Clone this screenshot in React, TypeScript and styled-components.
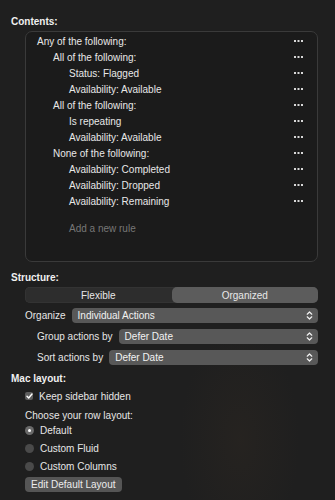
import styled, { createGlobalStyle } from "styled-components";

const GlobalStyle = createGlobalStyle`
  html, body {
    margin: 0;
    padding: 0;
    background: #1f1f1f;
  }
  body {
    font-family: "Liberation Sans", Arial, sans-serif;
    font-size: 10px;
    color: #e6e6e6;
    -webkit-font-smoothing: antialiased;
  }
`;

const Page = styled.div`
  width: 335px;
  height: 500px;
  box-sizing: border-box;
  padding: 13px 17px 0 11px;
  background:
    radial-gradient(ellipse 80px 150px at 240px 440px, rgba(55, 45, 35, 0.28), transparent 75%),
    #1f1f1f;
  overflow: hidden;
`;

const SectionTitle = styled.div<{ $top?: number }>`
  font-weight: 700;
  line-height: 16px;
  height: 16px;
  padding-top: 1px;
  box-sizing: border-box;
  color: #f0f0f0;
  margin-top: ${(p) => p.$top ?? 0}px;
`;

const Indent = styled.div`
  padding-left: 14px;
`;

const RuleBox = styled.div`
  margin: 2px 0 0 14px;
  border: 1px solid #3a3a3a;
  border-radius: 7px;
  background: #1b1b1b;
  padding: 1px 13px 24px 0;
  height: 231px;
  box-sizing: border-box;
`;

const RuleRow = styled.div<{ $level: number }>`
  display: flex;
  align-items: center;
  height: 16px;
  padding-left: ${(p) => 11 + p.$level * 16}px;
  color: #e8e8e8;
`;

const RuleText = styled.span`
  flex: 1;
  white-space: nowrap;
`;

const AddRule = styled.div`
  margin-top: 12px;
  height: 16px;
  line-height: 16px;
  padding-left: 43px;
  color: #777;
`;

const Dots = () => (
  <svg width="10" height="2" viewBox="0 0 10 2">
    <rect x="0" y="0" width="2" height="2" fill="#d8d8d8" />
    <rect x="3.5" y="0" width="2" height="2" fill="#d8d8d8" />
    <rect x="7" y="0" width="2" height="2" fill="#d8d8d8" />
  </svg>
);

const Segmented = styled.div`
  margin: 2px 0 0 14px;
  display: grid;
  grid-template-columns: 1fr 1fr;
  height: 16px;
  background: #2d2d2d;
  border-radius: 5px;
  box-shadow: inset 0 0 0 0.5px #3a3a3a;
`;

const Segment = styled.div<{ $active?: boolean }>`
  display: flex;
  align-items: center;
  justify-content: center;
  border-radius: 5px;
  background: ${(p) => (p.$active ? "#5c5c5c" : "transparent")};
  color: #e8e8e8;
`;

const PopupRow = styled.div<{ $indent: number; $top: number }>`
  display: flex;
  align-items: center;
  gap: 6px;
  margin-top: ${(p) => p.$top}px;
  padding-left: ${(p) => p.$indent}px;
`;

const PopupLabel = styled.span`
  white-space: nowrap;
  color: #e6e6e6;
`;

const Popup = styled.div`
  flex: 1;
  display: flex;
  align-items: center;
  justify-content: space-between;
  height: 15px;
  border-radius: 4px;
  background: #585858;
  padding: 0 5px 0 6px;
  color: #f2f2f2;
`;

const Chevrons = () => (
  <svg width="7" height="9" viewBox="0 0 7 9" fill="none" stroke="#f2f2f2" strokeWidth="1.2" strokeLinecap="round" strokeLinejoin="round">
    <path d="M1.2 3.2 L3.5 1 L5.8 3.2" />
    <path d="M1.2 5.8 L3.5 8 L5.8 5.8" />
  </svg>
);

const CheckRow = styled.label`
  display: flex;
  align-items: center;
  gap: 6px;
  height: 16px;
  margin-top: 2px;
`;

const CheckBox = styled.span`
  width: 8px;
  height: 8px;
  border-radius: 2px;
  background: #5d5d5d;
  display: flex;
  align-items: center;
  justify-content: center;
`;

const ChooseLabel = styled.div`
  height: 16px;
  line-height: 16px;
  margin-top: 4px;
`;

const RadioRow = styled.div`
  display: flex;
  align-items: center;
  gap: 6px;
  height: 14px;
  margin-top: 4px;
  &:first-of-type {
    margin-top: -1px;
  }
`;

const Radio = styled.span<{ $on?: boolean }>`
  width: 9px;
  height: 9px;
  border-radius: 50%;
  background: ${(p) => (p.$on ? "#6a6a6a" : "#4a4a4a")};
  display: flex;
  align-items: center;
  justify-content: center;
  &::after {
    content: "";
    width: 3px;
    height: 3px;
    border-radius: 50%;
    background: ${(p) => (p.$on ? "#ffffff" : "transparent")};
  }
`;

const Button = styled.div`
  display: inline-flex;
  align-items: center;
  height: 15px;
  padding: 0 6px;
  margin-top: 4px;
  border-radius: 4px;
  background: #555555;
  color: #ececec;
`;

const rules: [number, string][] = [
  [0, "Any of the following:"],
  [1, "All of the following:"],
  [2, "Status: Flagged"],
  [2, "Availability: Available"],
  [1, "All of the following:"],
  [2, "Is repeating"],
  [2, "Availability: Available"],
  [1, "None of the following:"],
  [2, "Availability: Completed"],
  [2, "Availability: Dropped"],
  [2, "Availability: Remaining"],
];

export default function App() {
  return (
    <>
      <GlobalStyle />
      <Page>
        <SectionTitle>Contents:</SectionTitle>
        <RuleBox>
          {rules.map(([level, text], i) => (
            <RuleRow key={i} $level={level}>
              <RuleText>{text}</RuleText>
              <Dots />
            </RuleRow>
          ))}
          <AddRule>Add a new rule</AddRule>
        </RuleBox>

        <SectionTitle $top={7}>Structure:</SectionTitle>
        <Segmented>
          <Segment>Flexible</Segment>
          <Segment $active>Organized</Segment>
        </Segmented>
        <PopupRow $indent={14} $top={5}>
          <PopupLabel>Organize</PopupLabel>
          <Popup>
            Individual Actions
            <Chevrons />
          </Popup>
        </PopupRow>
        <PopupRow $indent={26} $top={6}>
          <PopupLabel>Group actions by</PopupLabel>
          <Popup>
            Defer Date
            <Chevrons />
          </Popup>
        </PopupRow>
        <PopupRow $indent={26} $top={6}>
          <PopupLabel>Sort actions by</PopupLabel>
          <Popup>
            Defer Date
            <Chevrons />
          </Popup>
        </PopupRow>

        <SectionTitle $top={5}>Mac layout:</SectionTitle>
        <Indent>
          <CheckRow>
            <CheckBox>
              <svg width="7" height="6" viewBox="0 0 7 6" fill="none" stroke="#fff" strokeWidth="1.4" strokeLinecap="round" strokeLinejoin="round">
                <path d="M1 3.2 L2.7 5 L6 1" />
              </svg>
            </CheckBox>
            Keep sidebar hidden
          </CheckRow>
          <ChooseLabel>Choose your row layout:</ChooseLabel>
          <div>
            <RadioRow>
              <Radio $on />
              Default
            </RadioRow>
            <RadioRow>
              <Radio />
              Custom Fluid
            </RadioRow>
            <RadioRow>
              <Radio />
              Custom Columns
            </RadioRow>
          </div>
          <Button>Edit Default Layout</Button>
        </Indent>
      </Page>
    </>
  );
}
